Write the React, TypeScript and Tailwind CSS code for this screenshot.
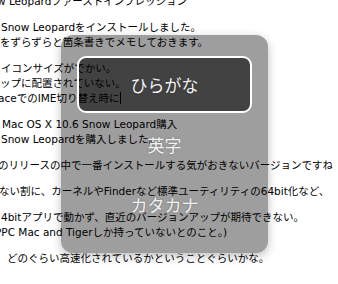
import React from "react";

const lines: { text: string; ml: string }[][] = [
  [{ text: "w Leopardファーストインプレッション", ml: "ml-[-3px]" }],
  [
    { text: "Snow Leopardをインストールしました。", ml: "ml-px" },
    { text: "をずらずらと箇条書きでメモしておきます。", ml: "ml-0" },
  ],
  [
    { text: "イコンサイズがでかい。", ml: "ml-px" },
    { text: "ップに配置されていない。", ml: "ml-0" },
    { text: "aceでのIME切り替え時に", ml: "ml-[-2px]" },
  ],
  [
    { text: "Mac OS X 10.6 Snow Leopard購入", ml: "ml-[2px]" },
    { text: "Snow Leopardを購入しました。", ml: "ml-px" },
  ],
  [{ text: "のリリースの中で一番インストールする気がおきないバージョンですね", ml: "ml-[-2px]" }],
  [{ text: "ない割に、カーネルやFinderなど標準ユーティリティの64bit化など、", ml: "ml-[-1px]" }],
  [
    { text: "4bitアプリで動かず、直近のバージョンアップが期待できない。", ml: "ml-px" },
    { text: "PPC Mac and Tigerしか持っていないとのこと。)", ml: "ml-[-5px]" },
  ],
  [{ text: "どのぐらい高速化されているかということぐらいかな。", ml: "ml-[7px]" }],
];

const modes = ["ひらがな", "英字", "カタカナ"];

export default function App() {
  return (
    <div className="relative w-[338px] h-[284px] overflow-hidden bg-white">
      {/* blog text behind the switcher */}
      <div className="mt-[-6px] flex flex-col gap-[11px] font-['DejaVu_Sans','Noto_Sans_CJK_JP',sans-serif] text-[10.5px] leading-[15px] text-black">
        {lines.map((para, i) => (
          <div key={i}>
            {para.map((line, j) => (
              <div key={j} className={`whitespace-nowrap ${line.ml}`}>
                {line.text}
                {line.text.startsWith("aceで") && (
                  <span className="ml-px inline-block h-[12px] w-px bg-black align-[-2px]" />
                )}
              </div>
            ))}
          </div>
        ))}
      </div>

      {/* input mode switcher */}
      <div className="absolute left-[61px] top-[35px] flex w-[207px] h-[218px] flex-col gap-[3px] rounded-[12px] bg-[rgba(0,0,0,0.38)] px-[16px] pt-[21px] shadow-[0_3px_10px_rgba(0,0,0,0.25)]">
        {modes.map((mode, i) => (
          <div
            key={mode}
            className={
              i === 0
                ? "flex h-[57px] items-center justify-center rounded-[9px] border-2 border-white bg-[rgba(0,0,0,0.58)]"
                : "flex h-[57px] items-center justify-center"
            }
          >
            <span className="font-['Noto_Sans_CJK_JP',sans-serif] text-[17px] leading-none text-[#f2f2f2] [text-shadow:0_0_2px_rgba(0,0,0,0.3)]">
              {mode}
            </span>
          </div>
        ))}
      </div>
    </div>
  );
}
